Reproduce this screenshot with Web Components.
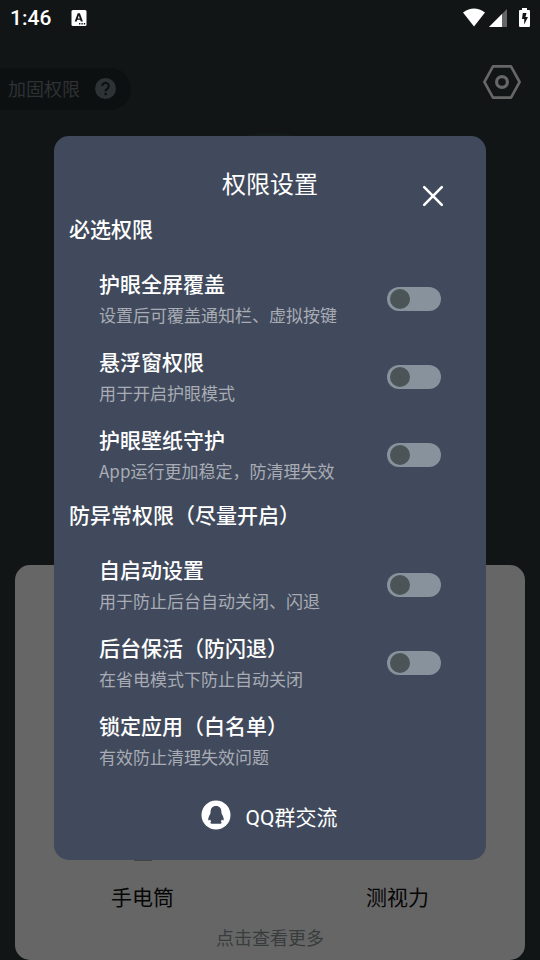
<!DOCTYPE html>
<html lang="zh-CN">
<head>
<meta charset="utf-8">
<meta name="viewport" content="width=device-width, initial-scale=1">
<title>权限设置</title>
<style>
html, body { margin: 0; min-height: 100%; background: #111516; }
body { font-family: Roboto, "Noto Sans CJK SC", sans-serif; color: #fff; }
</style>
</head>
<body>
<app-screen>
  <status-bar slot="status">1:46</status-bar>
  <top-bar slot="top">加固权限</top-bar>
  <tool-card slot="card">
    <tool-tile>手电筒</tool-tile>
    <tool-tile>测视力</tool-tile>
    <span slot="more">点击查看更多</span>
  </tool-card>
  <permission-dialog slot="dialog">
    <span slot="title">权限设置</span>
    <permission-group label="必选权限">
      <permission-row label="护眼全屏覆盖" switchable>设置后可覆盖通知栏、虚拟按键</permission-row>
      <permission-row label="悬浮窗权限" switchable>用于开启护眼模式</permission-row>
      <permission-row label="护眼壁纸守护" switchable>App运行更加稳定，防清理失效</permission-row>
    </permission-group>
    <permission-group label="防异常权限（尽量开启）">
      <permission-row label="自启动设置" switchable>用于防止后台自动关闭、闪退</permission-row>
      <permission-row label="后台保活（防闪退）" switchable>在省电模式下防止自动关闭</permission-row>
      <permission-row label="锁定应用（白名单）">有效防止清理失效问题</permission-row>
    </permission-group>
    <qq-link slot="footer">QQ群交流</qq-link>
  </permission-dialog>
</app-screen>
<script>
const define = (name, html, setup) => customElements.define(name, class extends HTMLElement {
  connectedCallback() {
    if (this.shadowRoot) return;
    const root = this.attachShadow({ mode: 'open' });
    root.innerHTML = html;
    if (setup) setup(this, root);
  }
});

define('app-screen', `
<style>
:host { display: flex; flex-direction: column; position: relative; min-height: 100vh; overflow: hidden; background: #111516; }
.lamp { position: absolute; top: 133px; left: 50%; width: 260px; height: 260px; margin-left: -130px; border-radius: 50%; background: #14191a; }
main { margin-top: auto; padding: 0 15px; }
.overlay { position: absolute; inset: 36px 0 0; display: flex; align-items: center; justify-content: center; }
</style>
<slot name="status"></slot>
<slot name="top"></slot>
<div class="lamp"></div>
<main><slot name="card"></slot></main>
<div class="overlay"><slot name="dialog"></slot></div>`);

define('status-bar', `
<style>
:host { display: flex; align-items: center; height: 36px; padding: 0 10px; font-size: 21px; font-weight: 500; line-height: 38px; }
svg { display: block; fill: #fff; }
.note { margin-left: 20px; }
.right { margin-left: auto; display: flex; align-items: center; }
.signal { margin: 0 12px 0 4px; }
</style>
<slot></slot>
<svg class="note" width="16" height="18" viewBox="0 0 16 18"><rect x="0.5" y="1" width="15" height="16" rx="1.5"/><path fill="#111516" fill-rule="evenodd" d="M6.7 4.2h2.2l3 8.4H9.8l-.6-1.8H6.3l-.6 1.8H3.7zM7.8 6.400l-1 3h2z"/><path fill="#111516" d="M8 14h1.400v1.400H8zM10.400 14h1.400v1.400h-1.400zM12.800 14h1.400v1.400h-1.400z"/></svg>
<div class="right">
<svg width="22" height="20" viewBox="0 0 22 20"><path d="M0 4.500Q11-3.500 22 4.500L11 18.500z"/></svg>
<svg class="signal" width="18" height="20" viewBox="0 0 18 20"><path fill="#666" d="M18 1v18H0z"/><path d="M13 6v13H0z"/></svg>
<svg width="11" height="20" viewBox="0 0 11 20"><path fill-rule="evenodd" d="M3 0h5v2h2q1 0 1 1v15q0 1-1 1H1q-1 0-1-1V3q0-1 1-1h2zM7.500 5H3.800L3 11h2.200v5.500L9 9H6.500z"/></svg>
</div>`);

define('top-bar', `
<style>
:host { display: flex; align-items: flex-start; justify-content: space-between; padding: 29px 19px 0 0; }
button { font: inherit; color: inherit; border: 0; margin: 0; background: none; cursor: pointer; }
.pill { display: flex; align-items: center; gap: 15px; height: 42px; margin-top: 3px; padding: 0 15px 2px 8px; border-radius: 0 21px 21px 0; background: #0d1011; color: #2d3234; font-size: 18px; }
.gear { padding: 0; }
svg { display: block; }
</style>
<button class="pill"><slot></slot>
<svg width="21" height="21" viewBox="0 0 24 24"><circle cx="12" cy="12" r="12" fill="#2d3234"/><path d="M8.300 9.200a3.700 3.700 0 1 1 5.900 3q-2.100 1.500-2.100 3" fill="none" stroke="#0d1011" stroke-width="2.400"/><rect x="10.800" y="17" width="2.600" height="2.600" fill="#0d1011"/></svg></button>
<button class="gear" aria-label="设置">
<svg width="38" height="34" viewBox="0 0 38 34" fill="none" stroke="#676767"><path stroke-width="2.600" stroke-linejoin="round" d="M10 1.400h18L36.600 17l-8.600 15.600H10L1.400 17z"/><circle cx="19" cy="17" r="5.400" stroke-width="3.200"/></svg></button>`);

define('tool-card', `
<style>
:host { display: flex; flex-direction: column; justify-content: flex-end; min-height: 395px; border-radius: 15px; background: #666; color: #060606; }
.tiles { display: grid; grid-template-columns: 1fr 1fr; }
.more { border: 0; background: none; padding: 6px 0 7px; font: inherit; font-size: 18px; line-height: 28px; color: #393c3d; cursor: pointer; }
</style>
<div class="tiles"><slot></slot></div>
<button class="more"><slot name="more"></slot></button>`);

define('tool-tile', `
<style>
:host { display: block; }
button { display: flex; flex-direction: column; align-items: center; width: 100%; border: 0; padding: 0; background: none; font: inherit; font-size: 21px; line-height: 42px; color: inherit; cursor: pointer; }
svg { display: block; margin-bottom: 16px; }
</style>
<button><svg width="48" height="48" viewBox="0 0 48 48" fill="#444"></svg><slot></slot></button>`,
(host, root) => {
  if (!host.previousElementSibling)
    root.querySelector('svg').innerHTML = '<path d="M11 0h26v10l-4 8v30H15V18l-4-8z"/>';
});

define('permission-dialog', `
<style>
:host { display: block; width: 80%; border-radius: 15px; background: #404a5c; }
header { display: grid; grid-template-columns: 1fr auto 1fr; padding: 0 41px; }
h1 { grid-column: 2; margin: 29px 0 3px; font-size: 24px; line-height: 40px; font-weight: 400; }
button { align-self: end; justify-self: end; width: 24px; height: 24px; padding: 0; border: 0; background: none; cursor: pointer; }
svg { display: block; }
</style>
<section role="dialog" aria-labelledby="t">
<header><h1 id="t"><slot name="title"></slot></h1>
<button aria-label="关闭"><svg width="24" height="24" viewBox="0 0 24 24"><path d="M3.200 3.200l17.600 17.600M20.800 3.200L3.200 20.800" stroke="#fff" stroke-width="2.600" stroke-linecap="round"/></svg></button></header>
<slot></slot>
<slot name="footer"></slot>
</section>`);

define('permission-group', `
<style>
:host { display: block; }
h2 { margin: 0; padding: 7px 15px 15px; font-size: 21px; line-height: 30px; font-weight: 500; }
</style>
<h2></h2><slot></slot>`,
(host, root) => { root.querySelector('h2').textContent = host.getAttribute('label'); });

define('permission-row', `
<style>
:host { display: flex; align-items: center; justify-content: space-between; padding: 7px 45px; }
div { padding: 2px 0; }
label { display: block; font-size: 21px; line-height: 32px; font-weight: 500; white-space: nowrap; }
p { margin: 0; font-family: "Noto Sans CJK SC", sans-serif; font-size: 17px; line-height: 28px; color: #a9acb4; white-space: nowrap; }
input { appearance: none; flex: none; display: flex; align-items: center; box-sizing: border-box; width: 54px; height: 24px; margin: 0; padding: 0 3px; border-radius: 12px; background: #87929d; cursor: pointer; }
input::before { content: ""; width: 20px; height: 20px; border-radius: 50%; background: #4b5456; }
input:checked { justify-content: flex-end; }
</style>
<div><label for="s"></label><p id="d"><slot></slot></p></div>`,
(host, root) => {
  root.querySelector('label').textContent = host.getAttribute('label');
  if (host.hasAttribute('switchable')) {
    const input = document.createElement('input');
    input.type = 'checkbox';
    input.id = 's';
    input.setAttribute('aria-describedby', 'd');
    root.append(input);
  }
});

define('qq-link', `
<style>
:host { display: flex; justify-content: center; padding: 20px 2px 24px 0; }
a { display: flex; align-items: flex-start; gap: 15px; font-size: 21px; line-height: 36px; color: inherit; text-decoration: none; }
svg { display: block; }
</style>
<a href="#qq"><svg width="30" height="30" viewBox="0 0 30 30"><circle cx="15" cy="15" r="14.500" fill="#fff"/><path fill="#404a5c" d="M15 6c-3.700 0-5.400 2.600-5.400 6 0 1.200-.4 2.200-1.200 3.600-1 1.800-1.500 4-.8 4.800.5.500 1-.4 1.500-.8.200.8.600 1.500 1.100 2-1 .5-1.300 1.900.3 2.100h9c1.600-.2 1.300-1.600.3-2.100.5-.5.900-1.200 1.100-2 .5.400 1 1.300 1.500.8.700-.8.200-3-.8-4.800-.8-1.400-1.200-2.400-1.200-3.600 0-3.400-1.700-6-5.400-6z"/></svg><slot></slot></a>`);
</script>
</body>
</html>
